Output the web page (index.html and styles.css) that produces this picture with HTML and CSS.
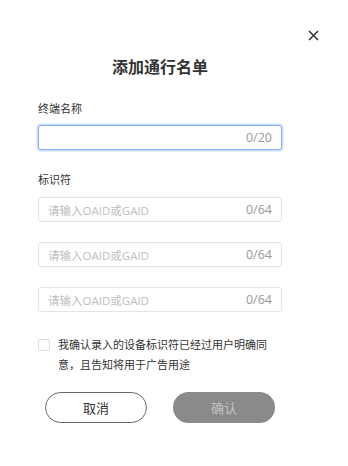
FILE: index.html
```html
<!DOCTYPE html>
<html lang="zh-CN">
<head>
<meta charset="utf-8">
<title>添加通行名单</title>
<link rel="stylesheet" href="styles.css">
</head>
<body>
<div class="modal">
  <div class="close-row">
    <svg class="close" viewBox="0 0 11 11" width="11" height="11"><path d="M1 1 L10 10 M10 1 L1 10" stroke="#333" stroke-width="1.5" fill="none"/></svg>
  </div>
  <div class="content">
    <h1 class="title">添加通行名单</h1>
    <div class="label label-first">终端名称</div>
    <div class="field field-focus"><span class="ph"></span><span class="count">0/20</span></div>
    <div class="label label-second">标识符</div>
    <div class="field"><span class="ph">请输入OAID或GAID</span><span class="count">0/64</span></div>
    <div class="field field-gap"><span class="ph">请输入OAID或GAID</span><span class="count">0/64</span></div>
    <div class="field field-gap"><span class="ph">请输入OAID或GAID</span><span class="count">0/64</span></div>
    <div class="agree">
      <span class="box"></span>
      <span class="agree-text">我确认录入的设备标识符已经过用户明确同意，且告知将用于广告用途</span>
    </div>
    <div class="actions">
      <button class="btn btn-cancel">取消</button>
      <button class="btn btn-ok">确认</button>
    </div>
  </div>
</div>
</body>
</html>
```
FILE: styles.css
```css
html, body {
  margin: 0;
  padding: 0;
  background: #fff;
}
body {
  font-family: "Open Sans", "Noto Sans CJK SC", sans-serif;
  color: #333;
}
.modal {
  width: 348px;
}
.close-row {
  display: flex;
  justify-content: flex-end;
  padding: 30px 29px 0 0;
  height: 11px;
}
.close {
  display: block;
}
.content {
  margin-left: 38px;
  width: 244px;
  display: flex;
  flex-direction: column;
}
.title {
  margin: 14px 0 0;
  font-family: "Noto Sans CJK SC", sans-serif;
  font-size: 16px;
  font-weight: bold;
  line-height: 22px;
  text-align: center;
  color: #333;
}
.label {
  font-family: "Noto Sans CJK SC", sans-serif;
  font-size: 11px;
  line-height: 16px;
  color: #333;
}
.label-first {
  margin-top: 23px;
}
.label-second {
  margin-top: 21px;
}
.field {
  box-sizing: border-box;
  height: 25px;
  border: 1px solid #e3e3e3;
  border-radius: 3px;
  display: flex;
  align-items: center;
  justify-content: space-between;
  padding: 0 9px 0 9px;
  margin-top: 10px;
}
.field-focus {
  margin-top: 9px;
  border-color: #7fb0f5;
  box-shadow: 0 0 0 1.5px rgba(140, 185, 250, 0.45);
}
.field-gap {
  margin-top: 20px;
}
.ph {
  font-family: "Open Sans", "Noto Sans CJK SC", sans-serif;
  font-size: 11.5px;
  color: #bdbdbd;
}
.count {
  font-size: 12.5px;
  color: #999;
}
.agree {
  display: flex;
  align-items: flex-start;
  margin-top: 22px;
}
.box {
  box-sizing: border-box;
  flex: none;
  width: 12px;
  height: 12px;
  border: 1px solid #dcdcdc;
  border-radius: 2px;
  margin-top: 5px;
  margin-right: 8px;
}
.agree-text {
  font-family: "Noto Sans CJK SC", sans-serif;
  font-size: 11px;
  line-height: 20px;
  color: #333;
  width: 216px;
}
.actions {
  display: flex;
  justify-content: center;
  gap: 26px;
  margin-top: 18px;
}
.btn {
  box-sizing: border-box;
  width: 102px;
  height: 31px;
  border-radius: 16px;
  font-family: "Noto Sans CJK SC", sans-serif;
  font-size: 13px;
  padding: 0;
}
.btn-cancel {
  background: #fff;
  border: 1px solid #666;
  color: #333;
}
.btn-ok {
  background: #8a8a8a;
  border: none;
  color: #c4c4c4;
}
```
